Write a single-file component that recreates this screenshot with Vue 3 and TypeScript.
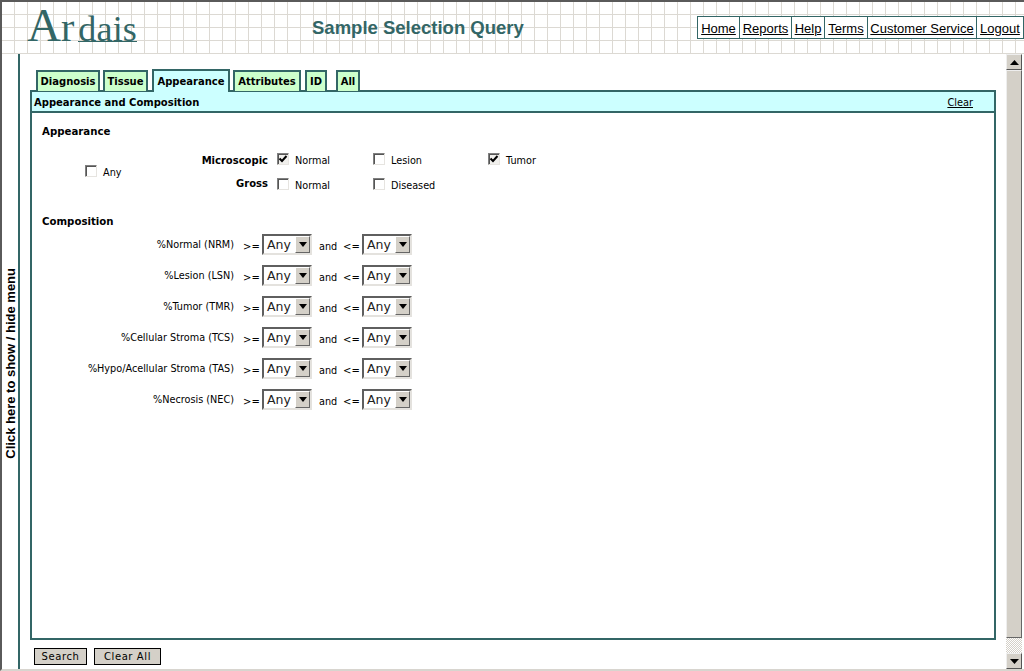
<script setup lang="ts">
interface Row { label: string }
const rows: Row[] = [
  { label: '%Normal (NRM)' },
  { label: '%Lesion (LSN)' },
  { label: '%Tumor (TMR)' },
  { label: '%Cellular Stroma (TCS)' },
  { label: '%Hypo/Acellular Stroma (TAS)' },
  { label: '%Necrosis (NEC)' },
]
const links = [
  { name: 'Home', w: 41 },
  { name: 'Reports', w: 52 },
  { name: 'Help', w: 33 },
  { name: 'Terms', w: 43 },
  { name: 'Customer Service', w: 109 },
  { name: 'Logout', w: 47 },
]
const tabs = [
  { name: 'Diagnosis', w: 64, gap: 3 },
  { name: 'Tissue', w: 45, gap: 4 },
  { name: 'Appearance', w: 78, gap: 3, active: true },
  { name: 'Attributes', w: 68, gap: 4 },
  { name: 'ID', w: 22, gap: 9 },
  { name: 'All', w: 24, gap: 0 },
]
</script>

<template>
  <div class="win">
    <header class="head">
      <div class="logo"><span class="a">A</span><span class="r">r</span><span class="dais">dais</span></div>
      <h1 class="title">Sample Selection Query</h1>
      <nav class="links">
        <a v-for="l in links" :key="l.name" class="link" :style="{ width: l.w + 'px' }">{{ l.name }}</a>
      </nav>
    </header>
    <div class="body">
      <aside class="side"><span class="sidetext">Click here to show / hide menu</span></aside>
      <main class="main">
        <div class="tabs">
          <div
            v-for="t in tabs"
            :key="t.name"
            class="tab"
            :class="{ active: t.active }"
            :style="{ width: t.w + 'px', marginRight: t.gap + 'px' }"
          >{{ t.name }}</div>
        </div>
        <section class="panel">
          <div class="bar"><b>Appearance and Composition</b><a class="clear">Clear</a></div>
          <div class="inner">
            <h2 class="h first">Appearance</h2>
            <div class="appear">
              <label class="opt any"><span class="cb"></span><span class="txt">Any</span></label>
              <div class="matrix">
                <b class="rowhead">Microscopic</b>
                <label class="opt c1"><span class="cb on"><svg width="10" height="10" viewBox="0 0 10 10"><path d="M1.5 4.5 L4 7 L8.5 2" fill="none" stroke="#000" stroke-width="2"/></svg></span><span class="txt">Normal</span></label>
                <label class="opt c2"><span class="cb"></span><span class="txt">Lesion</span></label>
                <label class="opt"><span class="cb on"><svg width="10" height="10" viewBox="0 0 10 10"><path d="M1.5 4.5 L4 7 L8.5 2" fill="none" stroke="#000" stroke-width="2"/></svg></span><span class="txt">Tumor</span></label>
                <b class="rowhead gross">Gross</b>
                <label class="opt c1"><span class="cb"></span><span class="txt">Normal</span></label>
                <label class="opt c2"><span class="cb"></span><span class="txt">Diseased</span></label>
              </div>
            </div>
            <h2 class="h second">Composition</h2>
            <div class="comp">
              <div v-for="r in rows" :key="r.label" class="crow">
                <span class="clabel">{{ r.label }}</span>
                <span class="op">&gt;=</span>
                <span class="sel"><span class="val">Any</span><span class="btn"><svg width="8" height="5" viewBox="0 0 8 5"><path d="M0 0H8L4 5Z" fill="#000"/></svg></span></span>
                <span class="and">and</span>
                <span class="op le">&lt;=</span>
                <span class="sel"><span class="val">Any</span><span class="btn"><svg width="8" height="5" viewBox="0 0 8 5"><path d="M0 0H8L4 5Z" fill="#000"/></svg></span></span>
              </div>
            </div>
          </div>
        </section>
        <div class="actions">
          <button class="act search">Search</button>
          <button class="act clearall">Clear All</button>
        </div>
      </main>
      <div class="scroll">
        <div class="sbtn"><svg width="9" height="5" viewBox="0 0 9 5"><path d="M0 5H9L4.5 0Z" fill="#000"/></svg></div>
        <div class="thumb"></div>
        <div class="track"></div>
        <div class="sbtn"><svg width="9" height="5" viewBox="0 0 9 5"><path d="M0 0H9L4.5 5Z" fill="#000"/></svg></div>
      </div>
    </div>
  </div>
</template>

<style>
html, body { margin: 0; background: #fff; overflow: hidden; }
</style>

<style scoped>
.win {
  width: 1024px;
  height: 671px;
  box-sizing: border-box;
  border-top: 2px solid #5a5a5a;
  border-left: 2px solid #5a5a5a;
  border-bottom: 2px solid #d8d5cf;
  display: flex;
  flex-direction: column;
  background: #fff;
  font-family: "DejaVu Sans", Verdana, sans-serif;
  color: #000;
  overflow: hidden;
}
.head {
  height: 52px;
  flex: none;
  display: flex;
  align-items: flex-start;
  background-color: #fff;
  background-image:
    linear-gradient(to right, #dcd9d3 1px, transparent 1px),
    linear-gradient(to bottom, #dcd9d3 1px, transparent 1px);
  background-size: 13px 13px;
  background-position: -1px -1px;
}
.logo {
  width: 283px;
  margin-left: 25px;
  margin-top: 3px;
  height: 40px;
  flex: none;
  font-family: "Liberation Serif", serif;
  color: #336666;
  display: flex;
  align-items: baseline;
}
.a { font-size: 47px; line-height: 40px; }
.r { font-size: 40px; line-height: 40px; margin-right: 4px; }
.dais { font-size: 36px; line-height: 40px; position: relative; letter-spacing: 0.2px; }
.dais::after {
  content: "";
  position: absolute;
  left: 0;
  right: 0;
  top: 32px;
  height: 1px;
  background: #336666;
}
.title {
  margin: 15px 0 0 0;
  padding-left: 2px;
  font: bold 18.5px/22px "Liberation Sans", Arial, sans-serif;
  color: #336666;
  width: 385px;
  flex: none;
}
.links {
  margin-top: 14px;
  display: flex;
  border: 1px solid #336666;
  background: #fff;
  height: 21px;
  flex: none;
}
.link {
  box-sizing: border-box;
  font: 13px/23px "Liberation Sans", Arial, sans-serif;
  text-decoration: underline;
  text-align: center;
  white-space: nowrap;
  border-left: 1px solid #336666;
  color: #000;
}
.link:first-child { border-left: 0; }
.body { flex: 1; display: flex; min-height: 0; }
.side {
  width: 16px;
  flex: none;
  border-right: 2px solid #336666;
  display: flex;
  align-items: center;
  justify-content: center;
}
.sidetext {
  writing-mode: vertical-rl;
  transform: rotate(180deg);
  font: bold 13px "Liberation Sans", Arial, sans-serif;
  white-space: nowrap;
  margin-top: 4px;
}
.main {
  flex: 1;
  min-width: 0;
  padding: 16px 10px 0 10px;
  display: flex;
  flex-direction: column;
}
.tabs {
  display: flex;
  height: 22px;
  padding-left: 6px;
  flex: none;
  position: relative;
  z-index: 1;
  margin-bottom: -2px;
}
.tab {
  box-sizing: border-box;
  height: 21px;
  border: 2px solid #336666;
  border-bottom: 0;
  background: #ccffcc;
  font: bold 10px/19px "DejaVu Sans", Verdana, sans-serif;
  text-align: center;
  white-space: nowrap;
}
.tab.active { background: #ccffff; height: 23px; margin-top: -1px; line-height: 21px; }
.panel {
  flex: none;
  height: 550px;
  box-sizing: border-box;
  border: 2px solid #336666;
  display: flex;
  flex-direction: column;
}
.bar {
  height: 18px;
  box-sizing: content-box;
  flex: none;
  background: #ccffff;
  border-bottom: 2px solid #336666;
  display: flex;
  align-items: center;
  justify-content: space-between;
  padding: 1px 21px 0 2px;
  font-size: 10px;
}
.clear { font-size: 9.8px; text-decoration: underline; }
.inner { flex: 1; padding: 0 0 0 10px; }
.h { margin: 0; font: bold 10.2px/14px "DejaVu Sans", Verdana, sans-serif; }
.h.first { margin-top: 12px; }
.h.second { margin-top: 16px; }
.appear { display: flex; margin-top: 12px; height: 48px; align-items: flex-start; }
.opt { display: flex; align-items: center; font-size: 9.7px; line-height: 13px; white-space: nowrap; }
.txt { position: relative; top: 2px; }
.any { margin: 13px 0 0 43px; width: 116px; flex: none; }
.cb {
  width: 12px;
  height: 12px;
  box-sizing: border-box;
  border: 1px solid;
  border-color: #808080 #e6e4e0 #e6e4e0 #808080;
  box-shadow: inset 1px 1px 0 #555;
  background: #fff;
  margin-right: 6px;
  flex: none;
  display: flex;
  align-items: center;
  justify-content: center;
}
.cb.on { background: #f0efec; }
.matrix {
  display: grid;
  grid-template-columns: 67px 105px 115px auto;
  grid-auto-rows: 25px;
  align-items: start;
}
.rowhead { font-size: 10px; text-align: right; line-height: 16px; position: relative; top: 2px; }
.rowhead.gross { top: 0; }
.matrix .opt { padding-top: 1px; }
.matrix .c1 { padding-left: 9px; }
.comp { margin-top: 5px; }
.crow { display: flex; align-items: center; height: 21px; margin-bottom: 10px; font-size: 9.7px; }
.clabel { width: 192px; text-align: right; flex: none; }
.op { width: 16px; margin-left: 9px; flex: none; font-size: 10px; margin-top: 4px; margin-right: 3px; }
.op.le { margin-left: 6px; }
.and { width: 18px; margin-left: 7px; flex: none; margin-top: 3px; }
.sel {
  width: 50px;
  height: 21px;
  box-sizing: border-box;
  border: 2px solid;
  border-color: #5f5f5f #e4e2de #e4e2de #5f5f5f;
  background: #fff;
  display: flex;
  align-items: stretch;
  flex: none;
}
.val { flex: 1; font-size: 12.5px; line-height: 17px; padding-left: 3px; color: #222; }
.btn {
  width: 15px;
  background: #d4d0c8;
  border: 1px solid;
  border-color: #fff #666 #666 #fff;
  box-sizing: border-box;
  display: flex;
  align-items: center;
  justify-content: center;
}
.actions { display: flex; gap: 7px; margin-top: 8px; padding-left: 4px; }
.act {
  height: 17px;
  box-sizing: border-box;
  padding: 0;
  background: #d4d0c8;
  border: 1px solid #000;
  font: 10px "DejaVu Sans", Verdana, sans-serif;
  letter-spacing: 0.6px;
  color: #000;
}
.search { width: 53px; }
.clearall { width: 67px; }
.scroll { width: 16px; flex: none; margin-right: 2px; display: flex; flex-direction: column; }
.sbtn {
  height: 16px;
  flex: none;
  background: #d4d0c8;
  border: 1px solid;
  border-color: #eee #555 #555 #eee;
  box-sizing: border-box;
  display: flex;
  align-items: center;
  justify-content: center;
}
.thumb {
  flex: 1;
  background: #d4d0c8;
  border: 1px solid;
  border-color: #eee #666 #666 #eee;
  box-sizing: border-box;
}
.track {
  height: 15px;
  flex: none;
  background-color: #fff;
  background-image: repeating-conic-gradient(#d4d0c8 0 25%, #fff 0 50%);
  background-size: 2px 2px;
}
</style>
